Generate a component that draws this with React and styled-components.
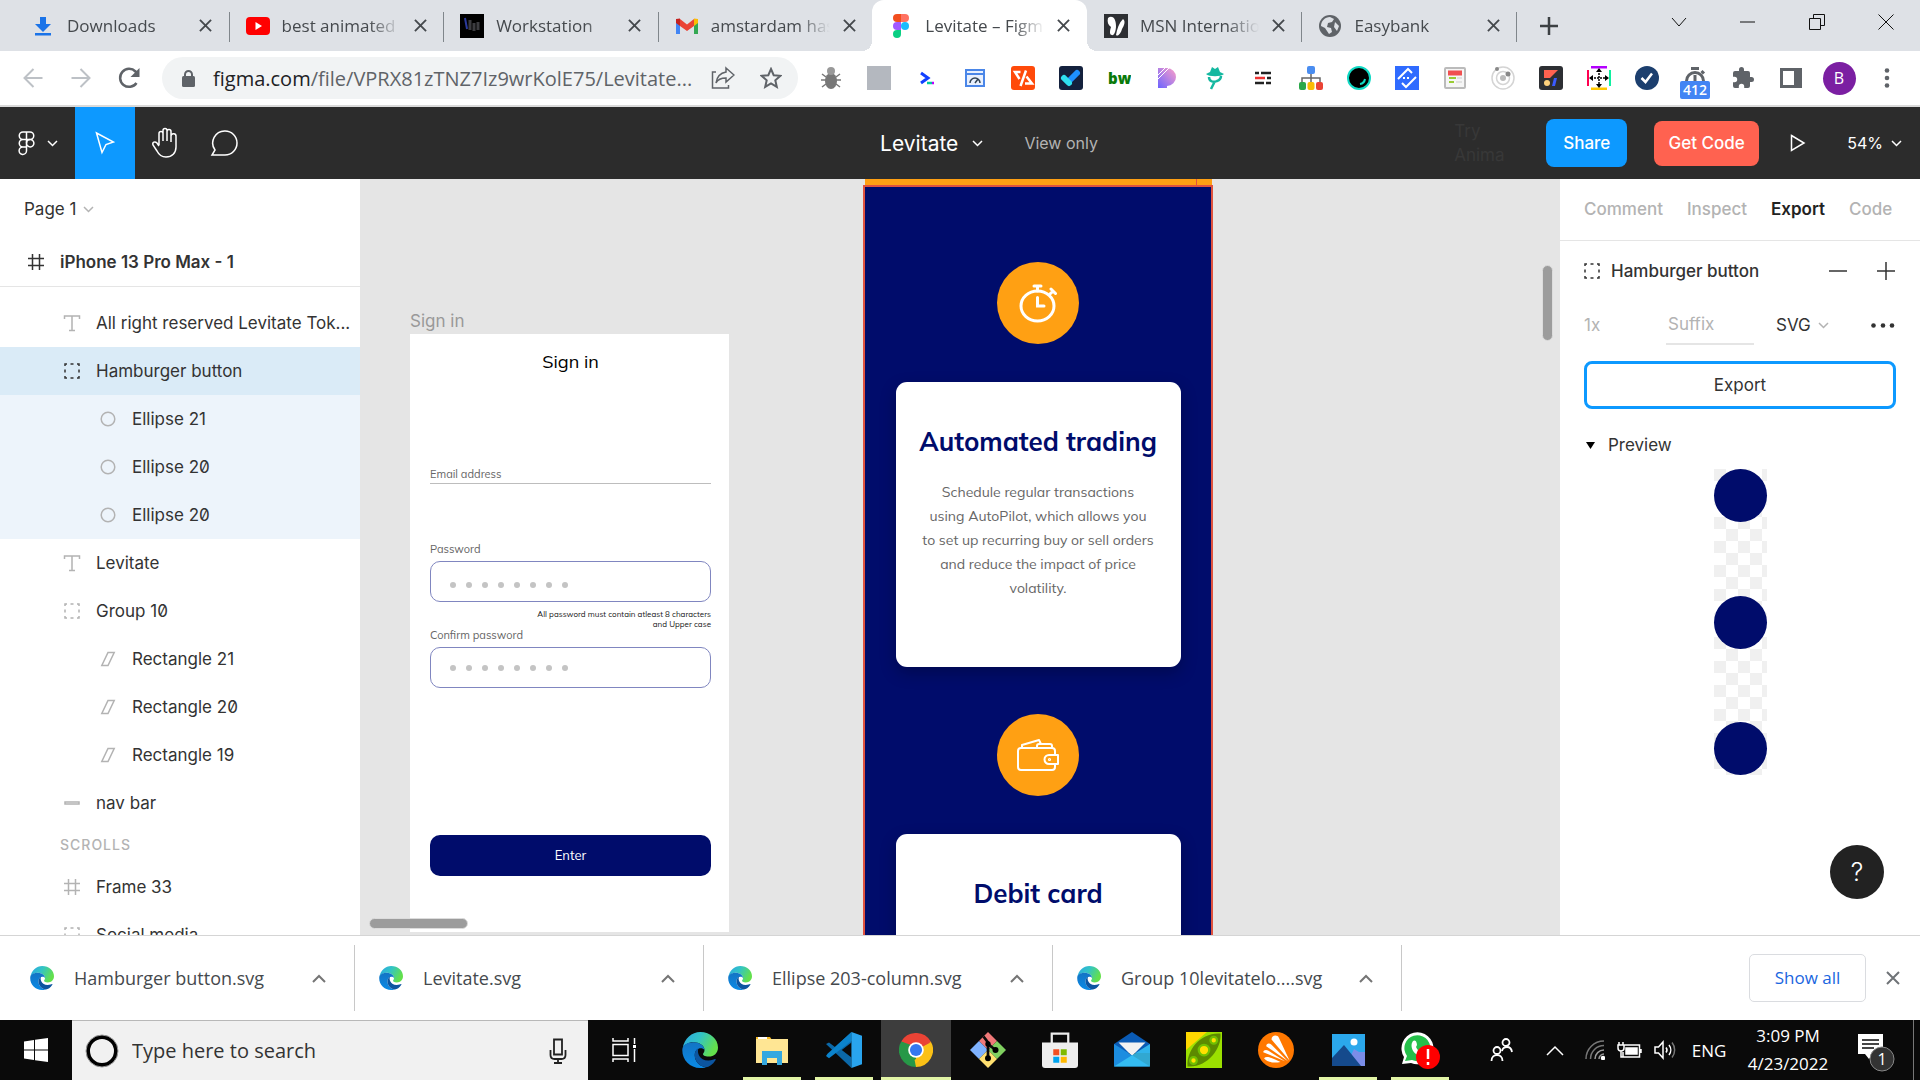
import React from "react";
import styled, { createGlobalStyle, css } from "styled-components";

const GlobalStyle = createGlobalStyle`
  *, *::before, *::after { box-sizing: border-box; }
  body { margin: 0; overflow: hidden; background: #fff; }
  button, input, select { font: inherit; color: inherit; margin: 0; padding: 0; border: 0; background: none; border-radius: 0; outline: 0; }
  button { cursor: pointer; }
  svg { display: block; flex: none; }
  p, h1, h2, h3, ul { margin: 0; padding: 0; }
`;

const system = '"Open Sans", "Noto Sans", sans-serif';
const inter = 'Inter, "Liberation Sans", sans-serif';
const mulish = 'Mulish, Lato, "Open Sans", sans-serif';

const navy = "#000c6b";
const orange = "#ffa013";
const blue = "#0d99ff";
const outline = "#e0533f";

const Screen = styled.div`
  display: flex;
  flex-direction: column;
  height: 100vh;
  font-family: ${inter};
  font-size: 17px;
  color: #333;
`;

/* ---------- Browser chrome ---------- */

const TabStrip = styled.header`
  display: flex;
  align-items: center;
  height: 51px;
  flex: none;
  padding-left: 14px;
  background: #dee1e6;
  font-family: ${system};
`;

const Tabs = styled.nav`
  display: flex;
  flex: 0 1 1502px;
  min-width: 0;
  max-width: 1502px;
  height: 51px;
`;

const Tab = styled.div`
  flex: 1 1 0;
  min-width: 0;
  display: flex;
  align-items: center;
  gap: 12px;
  padding: 0 16px 0 17px;
  font-size: 17px;
  color: #45494d;
  position: relative;
  ${(p) =>
    p.$active
      ? css`
          background: #fff;
          border-radius: 12px 12px 0 0;
          &::before, &::after {
            content: "";
            position: absolute;
            bottom: 0;
            width: 10px;
            height: 10px;
          }
          &::before { left: -10px; background: radial-gradient(circle at 0 0, transparent 10px, #fff 10px); }
          &::after { right: -10px; background: radial-gradient(circle at 100% 0, transparent 10px, #fff 10px); }
        `
      : !p.$last &&
        css`
          &::after {
            content: "";
            position: absolute;
            right: -1px;
            top: 12px;
            width: 1px;
            height: 30px;
            background: #80868b;
          }
        `}
`;

const TabLabel = styled.span`
  flex: 1;
  min-width: 0;
  white-space: nowrap;
  mask-image: linear-gradient(90deg, #000 calc(100% - 32px), transparent);
`;

const IconButton = styled.button`
  display: flex;
  align-items: center;
  justify-content: center;
  flex: none;
  width: ${(p) => p.$w || 24}px;
  height: ${(p) => p.$h || 24}px;
`;

const TabClose = styled(IconButton).attrs({ $w: 14, $h: 24 })``;

const WindowControls = styled.div`
  display: flex;
  margin-left: auto;
  align-self: flex-start;
  color: #111;
`;

const AddressRow = styled.div`
  display: flex;
  align-items: center;
  height: 56px;
  flex: none;
  padding: 0 9px;
  border-bottom: 2px solid #dadada;
  background: #fff;
  font-family: ${system};
`;

const AddressBox = styled.div`
  flex: 1;
  min-width: 0;
  display: flex;
  align-items: center;
  height: 42px;
  margin: 0 9px;
  padding: 0 3px 0 20px;
  border-radius: 21px;
  background: #f1f3f4;
  font-size: 20px;
  color: #5f6368;
  white-space: nowrap;
  b { font-weight: 400; color: #202124; }
`;

const Url = styled.span`
  flex: 1;
  min-width: 0;
  padding-left: 18px;
`;

const BoxActions = styled.div`
  display: flex;
`;

const Extensions = styled.div`
  display: flex;
`;

const Avatar = styled.span`
  width: 33px;
  height: 33px;
  border-radius: 50%;
  background: #7b1fa2;
  color: #fff;
  font-size: 16px;
  line-height: 33px;
  text-align: center;
`;

/* ---------- Editor toolbar ---------- */

const Toolbar = styled.div`
  display: flex;
  align-items: center;
  height: 72px;
  flex: none;
  background: #2c2c2c;
  color: #fff;
`;

const ToolGroup = styled.div`
  flex: 1 1 0;
  display: flex;
  align-items: center;
  justify-content: ${(p) => (p.$end ? "flex-end" : "flex-start")};
`;

const Tool = styled.button`
  display: flex;
  align-items: center;
  justify-content: center;
  gap: 12px;
  width: ${(p) => p.$w || 60}px;
  height: 72px;
  background: ${(p) => (p.$active ? blue : "transparent")};
`;

const DocTitle = styled.div`
  display: flex;
  align-items: center;
  padding-left: 58px;
`;

const DocName = styled.button`
  display: flex;
  align-items: center;
  gap: 14px;
  font-size: 21px;
`;

const ViewOnly = styled.span`
  margin-left: 41px;
  font-size: 16px;
  color: #b3b3b3;
`;

const TryAnima = styled.span`
  width: 54px;
  margin-right: 38px;
  font-size: 17px;
  line-height: 24px;
  color: #383838;
`;

const PrimaryButton = styled.button`
  width: ${(p) => p.$w}px;
  height: ${(p) => p.$h}px;
  border-radius: 8px;
  background: ${(p) => p.$bg};
  font-size: 17px;
  font-weight: 500;
  margin-right: 27px;
`;

const Zoom = styled.button`
  display: flex;
  align-items: center;
  gap: 8px;
  margin: 0 18px 0 37px;
  font-size: 16px;
`;

/* ---------- Workspace ---------- */

const Workspace = styled.main`
  flex: 1;
  min-height: 0;
  display: flex;
`;

const Layers = styled.aside`
  width: 361px;
  flex: none;
  overflow: hidden;
  border-right: 1px solid #e5e5e5;
  background: #fff;
`;

const PageButton = styled.button`
  display: flex;
  align-items: center;
  gap: 7px;
  height: 60px;
  padding-left: 24px;
`;

const LayerList = styled.ul`
  list-style: none;
`;

const FrameHeader = styled.button`
  display: flex;
  align-items: center;
  gap: 12px;
  width: 100%;
  height: 48px;
  padding: 0 0 2px 24px;
  border-bottom: 1px solid #e5e5e5;
  margin-bottom: 12px;
  font-weight: 600;
`;

const LayerRow = styled.button`
  display: flex;
  align-items: center;
  gap: 12px;
  width: 100%;
  height: 48px;
  padding: 0 12px 0 ${(p) => (p.$child ? 96 : 60)}px;
  background: ${(p) => p.$tint || "transparent"};
  font-feature-settings: "zero";
  white-space: nowrap;
  color: #333;
`;

const LayerIcon = styled.span`
  display: flex;
  justify-content: center;
  width: 24px;
  flex: none;
  color: ${(p) => (p.$dark ? "#333" : "#b3b3b3")};
`;

const SectionLabel = styled.h3`
  padding-left: 60px;
  line-height: 36px;
  font-size: 14px;
  font-weight: 500;
  letter-spacing: 1px;
  color: #b3b3b3;
`;

const Canvas = styled.section`
  flex: 1;
  position: relative;
  overflow: hidden;
  background: #e5e5e5;
`;

const Artboard = styled.div`
  position: absolute;
  left: ${(p) => p.$x}px;
  top: ${(p) => p.$y}px;
  width: ${(p) => p.$w}px;
`;

const ArtboardLabel = styled.div`
  padding-bottom: 2px;
  line-height: 22px;
  color: #999;
`;

const ScrollThumb = styled.div`
  position: absolute;
  border-radius: 6px;
  background: #9c9c9c;
  border: 1px solid #dcdcdc;
  ${(p) =>
    p.$vertical
      ? "right: 7px; top: 86px; width: 11px; height: 76px;"
      : "left: 8px; bottom: 6px; width: 99px; height: 11px;"}
`;

const SignInForm = styled.form`
  display: flex;
  flex-direction: column;
  padding: 16px 18px 56px 20px;
  background: #fff;
  font-family: ${mulish};
  font-size: 11px;
  color: #666;
`;

const FormTitle = styled.h2`
  font-size: 18px;
  line-height: 24px;
  font-weight: 400;
  text-align: center;
  color: #000;
`;

const EmailInput = styled.input`
  margin-top: 90px;
  height: 20px;
  border-bottom: 1px solid #bdbdbd;
  &::placeholder { color: #666; opacity: 1; }
`;

const FieldLabel = styled.label`
  line-height: 12px;
  margin-top: ${(p) => p.$gap || 0}px;
`;

const PasswordBox = styled.div`
  display: flex;
  align-items: center;
  gap: 10px;
  height: 41px;
  margin-top: 6px;
  padding: ${(p) => (p.$lower ? "6px" : "0")} 19px 0;
  border: 1px solid #8086c0;
  border-radius: 10px;
  input { flex: 1; min-width: 0; }
`;

const Dot = styled.span`
  width: 6px;
  height: 6px;
  border-radius: 50%;
  background: #c4c4c4;
`;

const Hint = styled.p`
  margin-top: 7px;
  font-size: 8px;
  line-height: 10px;
  text-align: right;
  color: #222;
`;

const EnterButton = styled.button`
  height: 41px;
  margin-top: 147px;
  padding-bottom: 2px;
  border-radius: 10px;
  background: ${navy};
  color: #fff;
  font-size: 13px;
`;

const OrangeBand = styled.div`
  height: 6px;
  margin: 0 1px 0 2px;
  background: ${orange};
  &::after {
    content: "";
    display: block;
    width: 1px;
    height: 6px;
    margin: 0 15px 0 auto;
    background: ${outline};
  }
`;

const BlueFrame = styled.div`
  display: flex;
  flex-direction: column;
  align-items: center;
  padding-top: 75px;
  border: 2px solid ${outline};
  background: ${navy};
`;

const Badge = styled.div`
  display: flex;
  align-items: center;
  justify-content: center;
  width: 82px;
  height: 82px;
  border-radius: 50%;
  background: ${orange};
`;

const FeatureCard = styled.article`
  width: 285px;
  height: 285px;
  margin: 38px 0 47px;
  padding-top: 44px;
  border-radius: 11px;
  background: #fff;
  box-shadow: 0 6px 16px rgba(0, 0, 0, 0.25);
  font-family: ${mulish};
  text-align: center;
  h2 { font-size: 26px; line-height: 32px; font-weight: 700; color: ${navy}; }
  p { margin-top: 22px; font-size: 14px; line-height: 24px; color: #666; white-space: nowrap; }
`;

/* ---------- Inspector ---------- */

const Inspector = styled.aside`
  width: 360px;
  flex: none;
  position: relative;
  background: #fff;
`;

const InspectorTabs = styled.nav`
  display: flex;
  align-items: center;
  gap: 24px;
  height: 62px;
  padding: 0 24px 2px;
  border-bottom: 1px solid #e5e5e5;
`;

const InspectorTab = styled.button`
  font-weight: ${(p) => (p.$active ? 600 : 500)};
  color: ${(p) => (p.$active ? "#222" : "#b3b3b3")};
`;

const InspectorRow = styled.div`
  display: flex;
  align-items: center;
  height: ${(p) => p.$h}px;
  padding: 0 25px 0 24px;
`;

const SelectionName = styled.h2`
  flex: 1;
  padding-left: 11px;
  font-size: 17px;
  font-weight: 500;
`;

const RowButtons = styled.div`
  display: flex;
  gap: 30px;
`;

const ScaleInput = styled.input`
  width: 82px;
  &::placeholder { color: #b3b3b3; opacity: 1; }
`;

const SuffixInput = styled.input`
  width: 88px;
  height: 40px;
  padding-left: 2px;
  border-bottom: 2px solid #e5e5e5;
  &::placeholder { color: #b3b3b3; opacity: 1; }
`;

const FormatSelect = styled.span`
  display: flex;
  align-items: center;
  flex: 1;
  padding-left: 22px;
  select { appearance: none; width: 42px; }
`;

const ExportButton = styled.button`
  display: block;
  width: calc(100% - 48px);
  height: 48px;
  margin: 12px 24px;
  border: 3px solid ${blue};
  border-radius: 8px;
`;

const PreviewToggle = styled.button`
  display: flex;
  align-items: center;
  gap: 13px;
  height: 48px;
  padding-left: 26px;
`;

const Preview = styled.div`
  display: flex;
  flex-direction: column;
  justify-content: space-between;
  width: 53px;
  height: 306px;
  margin: 0 auto;
  background: repeating-conic-gradient(#fff 0 25%, #f0f0f0 0 50%) 0 0 / 24px 24px;
  span { height: 53px; border-radius: 50%; background: ${navy}; }
`;

const HelpButton = styled.button`
  position: absolute;
  right: 36px;
  bottom: 36px;
  width: 54px;
  height: 54px;
  border-radius: 50%;
  background: #222;
  color: #fff;
  font-size: 25px;
  font-weight: 300;
`;

/* ---------- Downloads shelf ---------- */

const Shelf = styled.section`
  display: flex;
  align-items: center;
  height: 85px;
  flex: none;
  border-top: 1px solid #d5d5d5;
  background: #fff;
  font-family: ${system};
  padding-left: 6px;
`;

const DownloadItem = styled.div`
  display: flex;
  align-items: center;
  gap: 20px;
  flex: 0 1 349px;
  height: 66px;
  padding: 0 27px 0 24px;
  border-right: 1px solid #c8c8c8;
  font-size: 18px;
  color: #45494d;
  a { flex: 1; color: inherit; text-decoration: none; white-space: nowrap; }
`;

const ShelfEnd = styled.div`
  display: flex;
  align-items: center;
  gap: 20px;
  margin-left: auto;
  padding-right: 20px;
`;

const ShowAll = styled.button`
  width: 117px;
  height: 48px;
  padding-bottom: 2px;
  border: 1px solid #dadce0;
  border-radius: 5px;
  font-size: 17px;
  font-weight: 500;
  color: #1a66e0;
`;

/* ---------- Taskbar ---------- */

const Taskbar = styled.footer`
  display: flex;
  height: 60px;
  flex: none;
  background: #0a0a0a;
  color: #fff;
  font-family: ${system};
`;

const SearchBox = styled.label`
  display: flex;
  align-items: center;
  width: 516px;
  padding: 0 21px 0 13px;
  gap: 13px;
  border-top: 1px solid #b8b8b8;
  background: #f1f1f1;
  color: #222;
  input { flex: 1; min-width: 0; font-size: 20px; }
  input::placeholder { color: #333; opacity: 1; }
`;

const AppButton = styled.button`
  display: flex;
  align-items: center;
  justify-content: center;
  width: ${(p) => p.$w || 70}px;
  margin: 0 1px;
  padding-right: ${(p) => (p.$w ? 4 : 0)}px;
  position: relative;
  background: ${(p) => (p.$active ? "#3d3d3d" : "transparent")};
  &::after {
    content: "";
    display: ${(p) => (p.$open ? "block" : "none")};
    position: absolute;
    left: ${(p) => (p.$active ? 0 : 6)}px;
    right: ${(p) => (p.$active ? 0 : 6)}px;
    bottom: 0;
    height: 3px;
    background: #e2f5a6;
  }
`;

const Tray = styled.div`
  display: flex;
  margin-left: auto;
  padding-right: 6px;
`;

const TrayItem = styled.button`
  display: flex;
  align-items: center;
  justify-content: center;
  width: ${(p) => p.$w}px;
  font-size: 17px;
`;

const Clock = styled(TrayItem)`
  flex-direction: column;
  line-height: 28px;
`;

const DesktopEdge = styled.span`
  width: 1px;
  margin-left: 2px;
  background: #777;
`;

/* ---------- Drawings ---------- */

const Icon = ({ w = 24, h, vb, children, sw = 1.5, ...rest }) => (
  <svg width={w} height={h || w} viewBox={vb || `0 0 ${w} ${h || w}`} fill="none" stroke="currentColor" strokeWidth={sw} aria-hidden="true" {...rest}>
    {children}
  </svg>
);
const Art = ({ w = 24, h, vb = "0 0 24 24", children }) => (
  <svg width={w} height={h || w} viewBox={vb} aria-hidden="true">{children}</svg>
);

const Cross = ({ size = 14, sw = 2, color = "#45494d" }) => (
  <Icon w={size} vb="0 0 14 14" sw={sw} style={{ color }}><path d="M1 1l12 12M13 1L1 13" /></Icon>
);
const Down = ({ w = 11, color = "currentColor", sw = 1.5 }) => (
  <Icon w={w} h={7} vb="0 0 11 7" sw={sw} stroke={color}><path d="M1 1l4.500 4.500L10 1" /></Icon>
);
const GroupIcon = () => (
  <Icon w={16}>
    <path d="M1 3V1h2M6.500 1h3M13 1h2v2M15 6.500v3M15 13v2h-2M9.500 15h-3M3 15H1v-2M1 9.500v-3" />
  </Icon>
);
const FrameIcon = () => <Icon w={18} sw={1.5}><path d="M5.500 1v16M12.500 1v16M1 5.500h16M1 12.500h16" /></Icon>;
const TextIcon = () => <Icon w={18} sw={1.5}><path d="M1.500 5V2h15v3M9 2v14.500M6 16.500h6" /></Icon>;
const EllipseIcon = () => <Icon w={16}><circle cx="8" cy="8" r="6.800" /></Icon>;
const RectIcon = () => <Icon w={16}><path d="M8 1.500h6.200L8 14.500H1.800z" /></Icon>;
const BarIcon = () => <Icon w={16} h={4}><path d="M1 1h14v2H1z" /></Icon>;

const Edge = ({ size }) => (
  <Art w={size}>
    <defs>
      <linearGradient id="edgeTop" x1="0" y1="0" x2="1" y2="0.400">
        <stop offset="0" stopColor="#2aa7e6" /><stop offset="0.500" stopColor="#33c4c4" /><stop offset="1" stopColor="#63e04c" />
      </linearGradient>
      <linearGradient id="edgeLeft" x1="0" y1="0" x2="0" y2="1">
        <stop offset="0" stopColor="#1374c4" /><stop offset="1" stopColor="#0a8ae6" />
      </linearGradient>
    </defs>
    <path fill="url(#edgeTop)" d="M.5 10.500C1.600 4.500 6.500 0 12.200 0 19 0 24 4.800 24 10.300c0 3.700-2.700 6.100-6.200 6.100-2.800 0-3.900-1-3.800-1.700.2-.7 1-1.100 1-2.700 0-3-3.500-5.200-7.500-5.200C4 6.800 1.600 8.600.5 10.500z" />
    <path fill="url(#edgeLeft)" d="M.2 12C.2 9 3 6.800 7.500 6.800c4 0 7.500 2.200 7.500 5.200-1.500-2.200-6.500-1.500-6.500 3.500 0 4.500 3.500 7.500 7.500 8-1.500.5-3 .5-4 .5C5.500 24 .1 18.800.2 12z" />
    <path fill="#0c55a0" d="M8.500 15.500c0-3 1.500-4.300 2.500-4.700-1.200 2.700.5 8.200 6.500 8.200 2.500 0 4-1 4.500-1s.6.400.3.800C20.500 21.800 18 23.300 16 23.500c-4-.5-7.500-3.500-7.500-8z" />
  </Art>
);

const FigmaMark = () => (
  <Art w={16} h={26} vb="0 0 16 24">
    <path fill="#f24e1e" d="M8 0H4a4 4 0 000 8h4z" /><path fill="#ff7262" d="M8 0h4a4 4 0 010 8H8z" />
    <path fill="#a259ff" d="M8 8H4a4 4 0 000 8h4z" /><circle fill="#1abcfe" cx="12" cy="12" r="4" />
    <path fill="#0acf83" d="M4 16h4v4a4 4 0 11-4-4z" />
  </Art>
);

const TabIconBox = styled.span`
  display: flex;
  justify-content: center;
  width: 24px;
  flex: none;
`;

const tabs = [
  { label: "Downloads", icon: <Art><path fill="#1a73e8" d="M9 3h6v7h5l-8 8-8-8h5zM4 19h16v2.500H4z" /></Art> },
  { label: "best animated", icon: <Art><rect y="3" width="24" height="18" rx="4" fill="#f00" /><path fill="#fff" d="M9.500 8v8l6.500-4z" /></Art> },
  { label: "Workstation", icon: <Art><path d="M0 0h24v24H0z" /><path stroke="#2b3a9c" strokeWidth="2" d="M5 4l2 11" /><path stroke="#3c3c40" strokeWidth="3" d="M10 6v10M14 9v8M18 8v8" /></Art> },
  { label: "amstardam has", beforeActive: true, icon: (
    <Art>
      <path fill="#4285f4" d="M1 20h4V11L1 8z" /><path fill="#34a853" d="M19 20h4V8l-4 3z" />
      <path fill="#fbbc04" d="M19 4.500L23 5v4l-4 3z" /><path fill="#c5221f" d="M1 5l4-.5V12L1 9z" />
      <path fill="#ea4335" d="M5 12V5l7 5.500L19 5v7l-7 5z" />
    </Art>) },
  { label: "Levitate – Figm", icon: <FigmaMark />, active: true },
  { label: "MSN Internatio", icon: <Art><path fill="#2d2f33" d="M0 0h24v24H0z" /><path fill="#fff" d="M4 4c4-3 8 0 8 8 0 5-2 10-4 9-3 0-2-5-1-8-3-2-4-5-3-9zM19 5c3 2 1 7-1 10-1 4-4 8-6 6 1-6 3-12 7-16z" /></Art> },
  { label: "Easybank", icon: <Art><circle cx="12" cy="12" r="11" fill="#5f6368" /><path fill="#dee1e6" d="M12 3l4 2-2 3-4 1-1 4 4 1 1 4-3 2-4-6-4-2c0-5 4-9 9-9zM17 8l4 4-2 5-3-4z" /></Art> },
];

const extensions = [
  <Art><path stroke="#777" strokeWidth="1.500" fill="none" d="M3 8l4 3M21 8l-4 3M2 14h5M22 14h-5M3 21l4-3M21 21l-4-3" /><ellipse cx="12" cy="15" rx="6" ry="8" fill="#777" /><circle cx="12" cy="5" r="4" fill="#999" /></Art>,
  <Art><path fill="#b4b8bf" d="M0 0h24v24H0z" /></Art>,
  <Art><path fill="none" stroke="#1240ff" strokeWidth="3" d="M6 7l7 5-7 5" /><path stroke="#00c8a0" strokeWidth="2.500" d="M12 17h5" /><path stroke="#b0f" strokeWidth="2.500" d="M17 17h2" /></Art>,
  <Art><path fill="#e8f0fe" stroke="#4a86e8" strokeWidth="2" d="M3 4h18v16H3z" /><path stroke="#4a86e8" strokeWidth="2" d="M3 8h18" /><path fill="none" stroke="#345" strokeWidth="1.500" d="M7 17a5 5 0 0110 0M12 17l3-4" /></Art>,
  <Art><rect width="24" height="24" rx="3" fill="#ff4a0a" /><path fill="none" stroke="#fff" strokeWidth="2.500" d="M9.500 6H4l4.500 7M15 4.500L9.500 20M14 17.500h7l-5.500-7" /></Art>,
  <Art><rect width="24" height="24" rx="3" fill="#14213d" /><path stroke="#1e90ff" strokeWidth="6" strokeLinecap="round" d="M10 15l8-8" /><path stroke="#2fe0f0" strokeWidth="6" strokeLinecap="round" d="M5 12l5 5" /></Art>,
  <Art><text x="1" y="18" fontFamily="Open Sans" fontWeight="800" fontSize="15" fill="#0a7a0a">bw</text></Art>,
  <Art><defs><linearGradient id="pastel" x1="0" y1="1" x2="1" y2="0"><stop offset="0" stopColor="#6c63ff" /><stop offset="1" stopColor="#ffa0c8" /></linearGradient></defs><path fill="url(#pastel)" d="M3 2h9a9 9 0 010 18v2H3z" /><path stroke="#fff" d="M2 10l9-9M2 14L14 2" /></Art>,
  <Art><path fill="#14b8a0" d="M7 6l2-5 3 2 3-2 2 5 4 2c-3 3-15 3-18 0z" /><path fill="none" stroke="#14b8a0" strokeWidth="2.500" d="M6 11c0 4 4 6 8 4 3-1 4-3 4-5M12 15l-4 8" /></Art>,
  <Art><path stroke="#222" strokeWidth="2.500" d="M4 7h4M10 7h10M4 17h9M15 17h5M16 12h4" /><path stroke="#e33" strokeWidth="2.500" d="M4 12h10" /></Art>,
  <Art><rect x="8" width="8" height="8" rx="2" fill="#4a8df0" /><path fill="none" stroke="#666" strokeWidth="1.500" d="M12 8v8M3 16v-4h18v4" /><rect y="16" width="7" height="8" rx="2" fill="#2ba84a" /><rect x="8.500" y="16" width="7" height="8" rx="2" fill="#fbbc04" /><rect x="17" y="16" width="7" height="8" rx="2" fill="#ea4335" /></Art>,
  <Art><circle cx="12" cy="12" r="11" stroke="#10d9c4" strokeWidth="2" /><path fill="none" stroke="#10d9c4" strokeWidth="2" d="M18 13a6 6 0 01-5 5" /></Art>,
  <Art><path fill="#2f6bff" d="M0 0h24v24H0z" /><path fill="none" stroke="#fff" strokeWidth="2" d="M3 13L13 3l4 4M21 11L11 21l-4-4" /><path stroke="#fff" strokeWidth="2" strokeDasharray="2 2" d="M8 12h8" /></Art>,
  <Art><rect x="2" y="2" width="20" height="20" rx="1" fill="#f6f6f6" stroke="#bbb" strokeWidth="2" /><path stroke="#f05050" strokeWidth="5" d="M5 7h14" /><path stroke="#9c3" strokeWidth="2" d="M6 12h7M6 16h5" /><path stroke="#ccc" d="M14 12h5M13 16h6" /></Art>,
  <Art><g fill="none" stroke="#d4d4d4" strokeWidth="1.500"><circle cx="12" cy="12" r="11" /><circle cx="12" cy="12" r="6.500" /></g><circle cx="12" cy="12" r="3" fill="#bbb" /><circle cx="6" cy="3" r="2" fill="#888" /><circle cx="17" cy="8" r="2.500" fill="#888" /></Art>,
  <Art><rect width="24" height="24" rx="3" fill="#2d2f33" /><path fill="#ff6250" d="M5 4h14l-8 8H5z" /><circle cx="8" cy="17" r="3" fill="#ffd27d" /><path fill="#3b5bff" d="M15 12h3l-2 8h-3z" /></Art>,
  <Art><path stroke="#b400ff" strokeWidth="3" d="M4 1h16" /><path stroke="#ffc800" strokeWidth="3" d="M4 23h16" /><path stroke="#ff0050" strokeWidth="2" d="M1 4v16" /><path stroke="#10f0a0" strokeWidth="2" d="M23 4v16" /><path stroke="#000" strokeWidth="1.500" strokeDasharray="2 1" d="M12 4v16M4 12h16" /><path d="M12 2l3 4H9zM12 22l3-4H9zM2 12l4-3v6zM22 12l-4-3v6z" /></Art>,
  <Art><circle cx="12" cy="12" r="12" fill="#1c3f6e" /><path fill="none" stroke="#fff" strokeWidth="2.500" d="M6.500 12l4 4L17 7.500" /></Art>,
  <Art w={30} h={42} vb="0 -10 30 42"><path fill="none" stroke="#5f6368" strokeWidth="3" d="M11 1.500h8M6.500 14a8.500 8.500 0 0117 0M15 8v6M21.500 4l2.500 2.500" /><rect y="14" width="30" height="18" rx="2" fill="#4285f4" /><text x="15" y="28" textAnchor="middle" fontFamily="Open Sans" fontWeight="600" fontSize="14" fill="#fff">412</text></Art>,
  <Art><path fill="#5f6368" d="M20.500 11H19V7a2 2 0 00-2-2h-4V3.500a2.500 2.500 0 00-5 0V5H4a2 2 0 00-2 2v3.800h1.500a2.700 2.700 0 010 5.400H2V20a2 2 0 002 2h3.800v-1.500a2.700 2.700 0 015.400 0V22H17a2 2 0 002-2v-4h1.500a2.500 2.500 0 000-5z" /></Art>,
  <Art><path fill="none" stroke="#5f6368" strokeWidth="3" d="M2.500 3.500h19v17h-19z" /><path fill="#5f6368" d="M15 3h7v18h-7z" /></Art>,
  <Avatar>B</Avatar>,
  <Art><g fill="#5f6368"><circle cx="12" cy="4.500" r="2.300" /><circle cx="12" cy="12" r="2.300" /><circle cx="12" cy="19.500" r="2.300" /></g></Art>,
];

const light = "#edf4fb";
const layers = [
  { name: "All right reserved Levitate Tok...", icon: <TextIcon /> },
  { name: "Hamburger button", icon: <GroupIcon />, tint: "#daebf7", dark: true },
  { name: "Ellipse 21", icon: <EllipseIcon />, tint: light, child: true },
  { name: "Ellipse 20", icon: <EllipseIcon />, tint: light, child: true },
  { name: "Ellipse 20", icon: <EllipseIcon />, tint: light, child: true },
  { name: "Levitate", icon: <TextIcon /> },
  { name: "Group 10", icon: <GroupIcon /> },
  { name: "Rectangle 21", icon: <RectIcon />, child: true },
  { name: "Rectangle 20", icon: <RectIcon />, child: true },
  { name: "Rectangle 19", icon: <RectIcon />, child: true },
  { name: "nav bar", icon: <BarIcon /> },
];
const scrolls = [
  { name: "Frame 33", icon: <FrameIcon /> },
  { name: "Social media", icon: <GroupIcon /> },
];

const downloads = ["Hamburger button.svg", "Levitate.svg", "Ellipse 203-column.svg", "Group 10levitatelo....svg"];

const apps = [
  { name: "Edge", art: <Edge size={36} /> },
  { name: "File Explorer", open: true, art: <Art w={34} h={32} vb="0 0 34 32"><path fill="#f5b921" d="M1 3h14l2 3h-3v4H1z" /><path fill="#ffe694" d="M1 5h32v24H1z" /><path fill="#fff" d="M3 3h9v2H3z" /><path fill="#35a8e0" d="M7 17h20v14h-5v-7H12v7H7z" /></Art> },
  { name: "Visual Studio Code", open: true, art: <Art w={36}><path fill="#0b72b9" d="M17 0l-11 10-4-3-2 1 17 16z" opacity=".9" /><path fill="#0b83cc" d="M0 16l2 1.500L17 6V0L1 14.500z" /><path fill="#0a0a0a" d="M17 7v10l-6.500-5z" /><path fill="#29a4ee" d="M17 0l7 2.500v19L17 24z" /></Art> },
  { name: "Chrome", open: true, active: true, art: (
    <Art w={34}>
      <path fill="#ea4335" d="M12 12L1.600 6A12 12 0 0122.400 6z" /><path fill="#fbc116" d="M12 12l10.400-6A12 12 0 0112 24z" /><path fill="#279847" d="M12 12v12A12 12 0 011.600 6z" />
      <path fill="#ea4335" d="M12 6.500h10.600L12 12z" /><path fill="#fbc116" d="M16.800 14.800L12 24l-1-5z" /><path fill="#279847" d="M7.200 14.800L1.600 6 10 9z" />
      <circle cx="12" cy="12" r="5.500" fill="#fff" /><circle cx="12" cy="12" r="4.300" fill="#3478f0" />
    </Art>) },
  { name: "Git", art: <Art w={36}><path fill="#f07878" d="M12 0l6 6-6 6-6-6z" /><path fill="#80b3ff" d="M6 6l6 6-6 6-6-6z" /><path fill="#80d060" d="M18 6l6 6-6 6-6-6z" /><path fill="#ffe070" d="M12 12l6 6-6 6-6-6z" /><path fill="none" stroke="#0a0a0a" strokeWidth="1.800" d="M9 3l3 4v11M12 8l5 4" /><circle cx="12" cy="17.500" r="2" /><circle cx="17" cy="12" r="2" /><circle cx="12" cy="8" r="1.800" /></Art> },
  { name: "Store", art: <Art w={36}><path fill="none" stroke="#eee" strokeWidth="1.500" d="M6.500 8V1h11v7" /><path fill="#eee" d="M0 7h24v15a2 2 0 01-2 2H2a2 2 0 01-2-2z" /><path fill="#f25022" d="M7.500 11.500h4v4h-4z" /><path fill="#7fba00" d="M12.500 11.500h4v4h-4z" /><path fill="#00a4ef" d="M7.500 16.500h4v4h-4z" /><path fill="#ffb900" d="M12.500 16.500h4v4h-4z" /></Art> },
  { name: "Mail", art: <Art w={36}><path fill="#0a5bb5" d="M0 8l12-8 12 8v6H0z" /><path fill="#f2f2f2" d="M3 7h18l-9 9z" /><path fill="#1c8de0" d="M0 8l24 15H0z" /><path fill="#38c4f5" d="M24 8L0 23h24z" opacity=".85" /></Art> },
  { name: "Picasa", art: <Art w={36}><path fill="#9be000" d="M0 0h24v24H0z" /><path fill="#ffd800" d="M0 0h14L0 12z" /><path fill="#5c8a00" d="M1 23C0 12 10 0 23 1c1 10-9 23-22 22z" /><g fill="#ffe000" stroke="#70c000" strokeWidth="1.500"><circle cx="12" cy="12" r="3.500" /><circle cx="18.500" cy="5.500" r="2.200" /><circle cx="5" cy="19" r="2.200" /></g></Art> },
  { name: "Avast", art: <Art w={36}><circle cx="12" cy="12" r="12" fill="#ff7800" /><path fill="#fff" d="M9 5c0-3 4-3.500 5-1l7 15zM5.500 9.500c0-2 2-2.500 3.500-1l11 11zM3.500 13.500c0-1.500 2-2 3.500-1l11 7zM4 17.500c2-2 5 0 11 2.500-5 1-9 0-11-2.500z" /></Art> },
  { name: "Photos", open: true, art: <Art w={33} h={32} vb="0 0 33 32"><path fill="#2ba8ec" d="M0 0h33v32H0z" /><path fill="#7b8de8" d="M22 15l5 3 6 0v14H14z" /><path fill="#154a8c" d="M0 24l12-13 17 21H0z" /><circle cx="22" cy="8" r="3.500" fill="#fff" /></Art> },
  { name: "WhatsApp", open: true, art: <Art w={40} vb="0 0 40 40"><path fill="#fff" d="M2 34l2-7a16 16 0 117 6z" /><path fill="#25c04a" d="M5 31l2-5a13 13 0 115 4z" /><path fill="#fff" d="M13 11c3-2 4 2 4 4l-1 2c1 3 4 5 6 5l2 3c-7 4-16-7-11-14z" /><circle cx="28" cy="27" r="12" fill="#f00" /><path stroke="#fff" strokeWidth="2.500" d="M28 19v10M28 32v3" /></Art> },
];

const LayerItem = ({ layer }) => (
  <li>
    <LayerRow $child={layer.child} $tint={layer.tint}>
      <LayerIcon $dark={layer.dark}>{layer.icon}</LayerIcon>
      {layer.name}
    </LayerRow>
  </li>
);

const PasswordField = ({ id, label, gap, lower }) => (
  <>
    <FieldLabel htmlFor={id} $gap={gap}>{label}</FieldLabel>
    <PasswordBox $lower={lower}>
      {Array.from({ length: 8 }, (_, i) => <Dot key={i} />)}
      <input id={id} type="password" />
    </PasswordBox>
  </>
);

const Browser = () => (
  <>
    <TabStrip>
      <Tabs>
        {tabs.map((t) => (
          <Tab key={t.label} $active={t.active} $last={t.beforeActive}>
            <TabIconBox>{t.icon}</TabIconBox>
            <TabLabel>{t.label}</TabLabel>
            <TabClose aria-label="Close tab"><Cross size={13} /></TabClose>
          </Tab>
        ))}
      </Tabs>
      <IconButton $w={66} aria-label="New tab"><Icon w={18} sw={2.500} style={{ color: "#3c4043" }}><path d="M9 0v18M0 9h18" /></Icon></IconButton>
      <WindowControls>
        <IconButton $w={69} $h={44} aria-label="Search tabs"><Icon w={16} h={10} sw={1}><path d="M1 1l7 8 7-8" /></Icon></IconButton>
        <IconButton $w={69} $h={44} aria-label="Minimize"><Icon w={15} h={2} sw={1}><path d="M0 1h15" /></Icon></IconButton>
        <IconButton $w={69} $h={44} aria-label="Restore"><Icon w={16} sw={1}><path d="M.5 4.500h11v11H.5zM4.500 4V.5h11v11H12" /></Icon></IconButton>
        <IconButton $w={69} $h={44} aria-label="Close"><Icon w={16} sw={1}><path d="M.5.5l15 15M15.500.5l-15 15" /></Icon></IconButton>
      </WindowControls>
    </TabStrip>
    <AddressRow>
      <IconButton $w={48} aria-label="Back"><Icon w={20} sw={2} style={{ color: "#bdc1c6" }}><path d="M19.500 10H2M10.500 1L1.500 10l9 9" /></Icon></IconButton>
      <IconButton $w={48} aria-label="Forward"><Icon w={20} sw={2} style={{ color: "#bdc1c6" }}><path d="M.5 10H18M9.500 1l9 9-9 9" /></Icon></IconButton>
      <IconButton $w={48} aria-label="Reload"><Icon w={22} sw={2.500} style={{ color: "#5f6368" }}><path d="M18.500 16A9 9 0 1117.500 4.500L20 7" /><path fill="#5f6368" stroke="none" d="M21.500 1v9h-9z" /></Icon></IconButton>
      <AddressBox>
        <Art w={13} h={17} vb="0 0 13 17"><rect y="6" width="13" height="11" rx="1.500" fill="#5f6368" /><path fill="none" stroke="#5f6368" strokeWidth="2" d="M3 7V4.500a3.500 3.500 0 017 0V7" /></Art>
        <Url><b>figma.com</b>/file/VPRX81zTNZ7Iz9wrKolE75/Levitate...</Url>
        <BoxActions>
          <IconButton $w={48} aria-label="Share page"><Icon w={24} sw={1.500}><path d="M5 6H1.500v16h16v-3M15 2l8 7-8 7v-4c-5 0-8 1-10 5 1-7 4-10 10-11z" /></Icon></IconButton>
          <IconButton $w={48} aria-label="Bookmark"><Icon w={22} sw={2}><path d="M11 2l2.700 6.200 6.700.6-5.100 4.500 1.500 6.600L11 16.400l-5.800 3.500 1.500-6.600L1.600 8.800l6.700-.6z" /></Icon></IconButton>
        </BoxActions>
      </AddressBox>
      <Extensions>
        {extensions.map((e, i) => <IconButton key={i} $w={48} $h={42} aria-label={`Extension ${i + 1}`}>{e}</IconButton>)}
      </Extensions>
    </AddressRow>
  </>
);

const EditorBar = () => (
  <Toolbar>
    <ToolGroup>
      <Tool $w={75} aria-label="Main menu">
        <Icon w={17} h={25} vb="0 0 17 25" sw={1.500}><path d="M8.500 1H5a3.700 3.700 0 000 7.500h3.500zM8.500 1H12a3.700 3.700 0 010 7.500H8.500zM8.500 8.500H5a3.700 3.700 0 000 7.500h3.500zM12 8.500a3.700 3.700 0 11-3.500 3.700M8.500 16v4A3.700 3.700 0 115 16" /><path d="M8.500 12.200A3.700 3.700 0 0112 8.500" /></Icon>
        <Down />
      </Tool>
      <Tool $active aria-label="Move">
        <Icon w={20} h={24} sw={1.500}><path d="M1.500 2l17 9-7.500 2.500-4 8z" /></Icon>
      </Tool>
      <Tool aria-label="Hand">
        <Icon w={28} h={32} sw={1.500}><path d="M8 18V6.500a2 2 0 014 0V14M12 14V3.500a2 2 0 014 0V14M16 14V4.500a2 2 0 014 0V15M20 9a2.500 2.500 0 015 .5V20c0 6-4 10-10 10-5 0-7-2-9-6l-4-6c-1-3 2-4 4-2l2 3" /></Icon>
      </Tool>
      <Tool $w={57} aria-label="Comment">
        <Icon w={28} sw={1.500}><path d="M15 2a12 12 0 110 24H2l3-5A12 12 0 0115 2z" /></Icon>
      </Tool>
    </ToolGroup>
    <DocTitle>
      <DocName>Levitate <Down /></DocName>
      <ViewOnly>View only</ViewOnly>
    </DocTitle>
    <ToolGroup $end>
      <TryAnima>Try Anima</TryAnima>
      <PrimaryButton $w={81} $h={48} $bg={blue}>Share</PrimaryButton>
      <PrimaryButton $w={105} $h={45} $bg="#ff6250">Get Code</PrimaryButton>
      <IconButton aria-label="Present"><Icon w={16} h={18} sw={1.500}><path d="M1.500 1.500L14 9 1.500 16.500z" /></Icon></IconButton>
      <Zoom>54% <Down /></Zoom>
    </ToolGroup>
  </Toolbar>
);

const DesignCanvas = () => (
  <Canvas>
    <Artboard $x={49} $y={131} $w={319}>
      <ArtboardLabel>Sign in</ArtboardLabel>
      <SignInForm onSubmit={(e) => e.preventDefault()}>
        <FormTitle>Sign in</FormTitle>
        <EmailInput type="email" aria-label="Email address" placeholder="Email address" />
        <PasswordField id="pw" label="Password" gap={59} lower />
        <Hint>All password must contain atleast 8 characters<br />and Upper case</Hint>
        <PasswordField id="pw2" label="Confirm password" />
        <EnterButton type="submit">Enter</EnterButton>
      </SignInForm>
    </Artboard>
    <Artboard $x={502} $y={0} $w={350}>
      <OrangeBand />
      <BlueFrame>
        <Badge>
          <Icon w={38} h={40} sw={3} style={{ color: "#fff" }} strokeLinecap="round">
            <ellipse cx="18.500" cy="23" rx="16.500" ry="15" /><path d="M18.500 8V3M15 3h7M18.500 14.500V23h6.500M31 11l3-3M32 6l4.500 4.500" />
          </Icon>
        </Badge>
        <FeatureCard>
          <h2>Automated trading</h2>
          <p>Schedule regular transactions<br />using AutoPilot, which allows you<br />to set up recurring buy or sell orders<br />and reduce the impact of price<br />volatility.</p>
        </FeatureCard>
        <Badge>
          <Icon w={42} h={32} sw={2} style={{ color: "#fff" }} strokeLinejoin="round">
            <path d="M38 16v-4a3 3 0 00-3-3H4a3 3 0 00-3 3v16a3 3 0 003 3h31a3 3 0 003-3v-3" /><path d="M5 9V6l17-5 2 4M20 9V7a2 2 0 012-2h11a2 2 0 012 2v2M41 16h-9a4.500 4.500 0 000 9h9z" /><circle cx="32.500" cy="20.500" r=".6" />
          </Icon>
        </Badge>
        <FeatureCard><h2>Debit card</h2></FeatureCard>
      </BlueFrame>
    </Artboard>
    <ScrollThumb $vertical />
    <ScrollThumb />
  </Canvas>
);

const ExportPanel = () => (
  <Inspector>
    <InspectorTabs>
      {["Comment", "Inspect", "Export", "Code"].map((t) => <InspectorTab key={t} $active={t === "Export"}>{t}</InspectorTab>)}
    </InspectorTabs>
    <InspectorRow $h={60}>
      <GroupIcon />
      <SelectionName>Hamburger button</SelectionName>
      <RowButtons>
        <IconButton $w={18} aria-label="Remove"><Icon w={18}><path d="M0 9h18" /></Icon></IconButton>
        <IconButton $w={18} aria-label="Add"><Icon w={18}><path d="M0 9h18M9 0v18" /></Icon></IconButton>
      </RowButtons>
    </InspectorRow>
    <InspectorRow $h={48}>
      <ScaleInput aria-label="Scale" placeholder="1x" />
      <SuffixInput aria-label="Suffix" placeholder="Suffix" />
      <FormatSelect>
        <select aria-label="Format" defaultValue="SVG"><option>SVG</option><option>PNG</option></select>
        <Down color="#b3b3b3" />
      </FormatSelect>
      <IconButton aria-label="More"><Icon w={24} h={5} sw={0}><circle fill="#333" cx="2.500" cy="2.500" r="2.300" /><circle fill="#333" cx="12" cy="2.500" r="2.300" /><circle fill="#333" cx="21" cy="2.500" r="2.300" /></Icon></IconButton>
    </InspectorRow>
    <ExportButton>Export</ExportButton>
    <PreviewToggle><Art w={9} h={7} vb="0 0 9 7"><path d="M0 0h9L4.500 7z" /></Art>Preview</PreviewToggle>
    <Preview><span /><span /><span /></Preview>
    <HelpButton>?</HelpButton>
  </Inspector>
);

export default function App() {
  return (
    <Screen>
      <GlobalStyle />
      <Browser />
      <EditorBar />
      <Workspace>
        <Layers>
          <PageButton>Page 1 <Down color="#b3b3b3" /></PageButton>
          <FrameHeader><LayerIcon $dark><FrameIcon /></LayerIcon>iPhone 13 Pro Max - 1</FrameHeader>
          <LayerList>{layers.map((l, i) => <LayerItem key={i} layer={l} />)}</LayerList>
          <SectionLabel>SCROLLS</SectionLabel>
          <LayerList>{scrolls.map((l) => <LayerItem key={l.name} layer={l} />)}</LayerList>
        </Layers>
        <DesignCanvas />
        <ExportPanel />
      </Workspace>
      <Shelf>
        {downloads.map((d) => (
          <DownloadItem key={d}>
            <Edge size={24} />
            <a href="#file">{d}</a>
            <IconButton $w={16} aria-label="Options"><Icon w={14} h={9} sw={2} style={{ color: "#757575" }}><path d="M1 8l6-6 6 6" /></Icon></IconButton>
          </DownloadItem>
        ))}
        <ShelfEnd>
          <ShowAll>Show all</ShowAll>
          <IconButton $w={14} aria-label="Close downloads"><Cross size={14} color="#6f7377" /></IconButton>
        </ShelfEnd>
      </Shelf>
      <Taskbar>
        <AppButton aria-label="Start"><Art w={24} ><path fill="#fff" d="M0 3.500l10-1.500v9.500H0zM11 1.800L24 0v11.500H11zM0 12.500h10V22L0 20.500zM11 12.500h13V24l-13-1.800z" /></Art></AppButton>
        <SearchBox>
          <Icon w={34} sw={4} style={{ color: "#000" }}><circle cx="17" cy="17" r="14" /><circle cx="17" cy="17" r="16" strokeWidth="1" stroke="#999" /></Icon>
          <input type="search" placeholder="Type here to search" aria-label="Search" />
          <Icon w={18} h={26} sw={1.800}><path d="M5 1.500h8v15H5zM1.500 12v5c0 3 2 4 4 4h7c2 0 4-1 4-4v-5M9 21v4M5 25h8" /></Icon>
        </SearchBox>
        <AppButton $w={74} aria-label="Task view"><Icon w={24} sw={1.500}><path d="M1 0v3h15V0M1 6.500h15v11H1zM1 24v-3h15v3M22.500 0v6M22.500 11v13" /><path d="M22.500 7v3" strokeWidth="3" /></Icon></AppButton>
        {apps.map((a) => <AppButton key={a.name} aria-label={a.name} $open={a.open} $active={a.active}>{a.art}</AppButton>)}
        <Tray>
          <TrayItem $w={58} aria-label="People"><Icon w={24} sw={1.800}><circle cx="16" cy="4.500" r="3.500" /><path d="M12 13c1-5 9-6 10 1" /><circle cx="7" cy="12.500" r="3.500" /><path d="M1.500 23c0-8 11-8 11 0" /></Icon></TrayItem>
          <TrayItem $w={48} aria-label="Hidden icons"><Icon w={18} h={11} sw={1.500}><path d="M1 10l8-8 8 8" /></Icon></TrayItem>
          <TrayItem $w={32} aria-label="Network"><Icon w={20} sw={1.500}><path stroke="#777" d="M1 19A18 18 0 0119 1M5.500 19A13.500 13.500 0 0119 5.500" /><path d="M10 19a9 9 0 019-9M14 19a5 5 0 015-5" stroke="#999" /><circle cx="18" cy="18" r="1.500" fill="#fff" /></Icon></TrayItem>
          <TrayItem $w={36} aria-label="Battery"><Icon w={25} h={18} sw={1.500}><path d="M6 4h16.500v12H6v-5M2 1v3M6 1v3M1 4h6v3a3 3 0 01-6 0zM4 10v6h2M24 8v4" /><path fill="#fff" d="M9 7h11v6H9z" /></Icon></TrayItem>
          <TrayItem $w={36} aria-label="Volume"><Icon w={23} h={20} sw={1.500}><path d="M1 7h3.500L9 2v16l-4.500-5H1zM12 7.500a4 4 0 010 5M15 5a8 8 0 010 10" /><path stroke="#777" d="M18 2.500a12 12 0 010 15" /></Icon></TrayItem>
          <TrayItem $w={52}>ENG</TrayItem>
          <Clock $w={106}><span>3:09 PM</span><span>4/23/2022</span></Clock>
          <TrayItem $w={70} aria-label="Notifications">
            <Art w={38} h={44} vb="0 -6 38 44"><path fill="#fff" d="M1 0h25v20H16l-4 5-4-5H1z" /><path stroke="#0a0a0a" strokeWidth="1.500" d="M5 6h17M5 10h17M5 14h12" /><circle cx="25" cy="25" r="12" fill="#333" stroke="#888" /><text x="25" y="31" textAnchor="middle" fontFamily="Open Sans" fontSize="16" fill="#fff">1</text></Art>
          </TrayItem>
          <DesktopEdge />
        </Tray>
      </Taskbar>
    </Screen>
  );
}
